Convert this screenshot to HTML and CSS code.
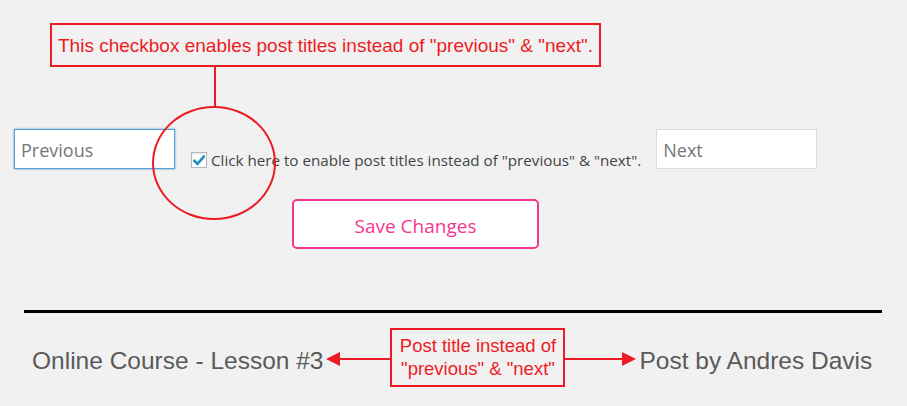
FILE: index.html
```html
<!DOCTYPE html>
<html>
<head>
<meta charset="utf-8">
<link rel="stylesheet" href="styles.css">
</head>
<body>
<div class="page">
  <div class="note-top">
    <div class="note-box">This checkbox enables post titles instead of "previous" &amp; "next".</div>
    <div class="connector"></div>
  </div>

  <div class="form-row">
    <input class="field field-prev" type="text" placeholder="Previous">
    <label class="check-label">
      <span class="checkbox">
        <svg width="12" height="11" viewBox="0 0 12 11"><path d="M1.5 5.8 L4.5 8.8 L10.8 1.6" fill="none" stroke="#1e8cbe" stroke-width="2.6" stroke-linecap="square"/></svg>
      </span>
      <span class="check-text">Click here to enable post titles instead of "previous" &amp; "next".</span>
    </label>
    <input class="field field-next" type="text" placeholder="Next">
    <div class="ring"></div>
  </div>

  <div class="btn-row">
    <button class="save-btn">Save Changes</button>
  </div>

  <div class="divider"></div>

  <div class="nav-row">
    <span class="nav-link">Online Course - Lesson #3</span>
    <span class="arrow arrow-left"><span class="head"></span><span class="shaft"></span></span>
    <div class="note-small">Post title instead of<br>"previous" &amp; "next"</div>
    <span class="arrow arrow-right"><span class="shaft"></span><span class="head"></span></span>
    <span class="nav-link nav-next">Post by Andres Davis</span>
  </div>
</div>
</body>
</html>
```

FILE: styles.css
```css
html, body {
  margin: 0;
  padding: 0;
  background: #f1f1f1;
}

.page {
  width: 907px;
  height: 406px;
  overflow: hidden;
  position: relative;
}

.note-top {
  padding-top: 23px;
  padding-left: 50px;
}

.note-box {
  display: inline-block;
  box-sizing: border-box;
  width: 551px;
  height: 44px;
  border: 2px solid #ed1c24;
  color: #ed1c24;
  font-family: "Liberation Sans", Arial, sans-serif;
  font-size: 19px;
  line-height: 42px;
  text-align: center;
  white-space: nowrap;
}

.connector {
  width: 2px;
  height: 41px;
  margin-left: 164px;
  background: #ed1c24;
}

.form-row {
  position: relative;
  display: flex;
  align-items: flex-start;
  margin-top: 21px;
  padding-left: 14px;
}

.field {
  box-sizing: border-box;
  width: 161px;
  height: 40px;
  background: #fff;
  font-family: "Open Sans", "Noto Sans", sans-serif;
  font-size: 18px;
  padding: 2px 6px 0;
  color: #32373c;
  outline: none;
}

.field::placeholder {
  color: #72777c;
  opacity: 1;
}

.field-prev {
  border: 1px solid #5b9dd9;
  box-shadow: 0 0 2px rgba(30, 140, 190, 0.8);
}

.field-next {
  border: 1px solid #ddd;
  margin-left: 15px;
}

.check-label {
  display: flex;
  align-items: center;
  margin-left: 16px;
  margin-top: 23px;
  height: 16px;
}

.checkbox {
  box-sizing: border-box;
  flex: none;
  width: 16px;
  height: 16px;
  border: 1px solid #b4b9be;
  background: #fff;
  display: flex;
  align-items: center;
  justify-content: center;
  box-shadow: inset 0 1px 2px rgba(0,0,0,0.1);
}

.check-text {
  margin-left: 4px;
  font-family: "Open Sans", "Noto Sans", sans-serif;
  font-size: 15.2px;
  color: #444;
  white-space: nowrap;
}

.ring {
  position: absolute;
  left: 152px;
  top: -23px;
  width: 124px;
  height: 114px;
  box-sizing: border-box;
  border: 2px solid #ed1c24;
  border-radius: 50%;
}

.btn-row {
  margin-top: 30px;
  padding-left: 292px;
}

.save-btn {
  box-sizing: border-box;
  width: 247px;
  height: 50px;
  background: #fff;
  border: 2px solid #f4368f;
  border-radius: 5px;
  color: #f4368f;
  font-family: "Open Sans", "Noto Sans", sans-serif;
  font-size: 19px;
  padding: 3px 0 0;
  cursor: pointer;
}

.divider {
  margin: 61px 0 0 24px;
  width: 858px;
  height: 3px;
  background: #000;
}

.nav-row {
  display: flex;
  align-items: center;
  margin-top: 15px;
  padding-left: 32px;
}

.nav-link {
  font-family: "Liberation Sans", Arial, sans-serif;
  font-size: 24.5px;
  color: #5a5a5a;
  white-space: nowrap;
  margin-top: 6px;
}

.arrow {
  display: flex;
  align-items: center;
  margin-top: 3px;
}

.arrow .shaft {
  display: block;
  height: 2px;
  background: #ed1c24;
}

.arrow .head {
  display: block;
  width: 0;
  height: 0;
  border-top: 7px solid transparent;
  border-bottom: 7px solid transparent;
}

.arrow-left {
  margin-left: 3px;
}

.arrow-left .head {
  border-right: 14px solid #ed1c24;
}

.arrow-left .shaft {
  width: 50px;
}

.arrow-right .shaft {
  width: 57px;
}

.arrow-right .head {
  border-left: 14px solid #ed1c24;
}

.note-small {
  box-sizing: border-box;
  flex: none;
  width: 175px;
  height: 59px;
  border: 2px solid #ed1c24;
  color: #ed1c24;
  font-family: "Liberation Sans", Arial, sans-serif;
  font-size: 18.5px;
  line-height: 23px;
  text-align: center;
  padding-top: 4px;
  white-space: nowrap;
}

.nav-next {
  margin-left: 3px;
}
```
